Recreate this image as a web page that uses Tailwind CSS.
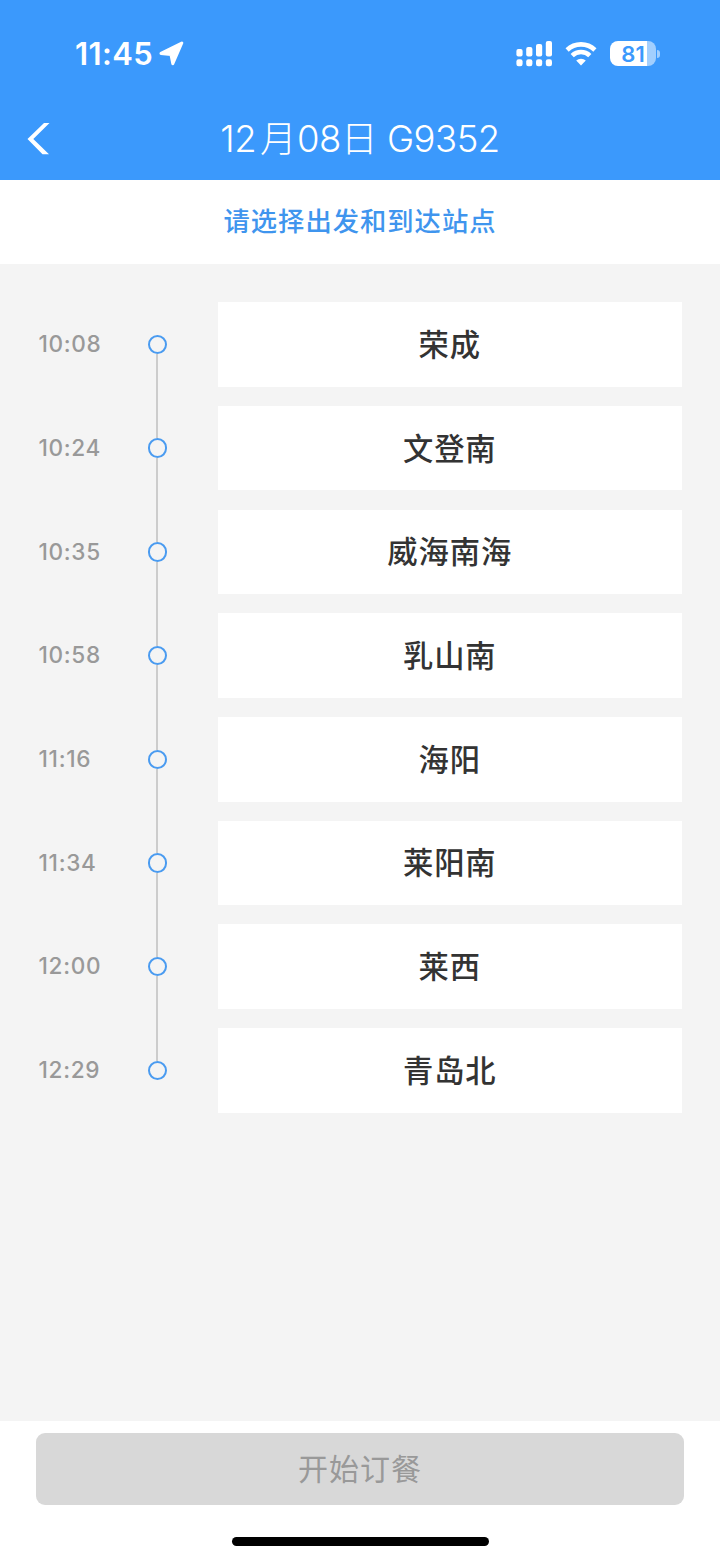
<!DOCTYPE html>
<html lang="zh-CN">
<head>
  <meta charset="UTF-8" />
  <meta name="viewport" content="width=device-width, initial-scale=1.0" />
  <title>选择站点</title>
  <script src="https://cdn.jsdelivr.net/npm/@tailwindcss/browser@4"></script>
</head>
<body class="bg-[#f4f4f4] font-['Inter','Noto_Sans_CJK_SC',sans-serif]">
  <div class="flex flex-col w-[720px] h-[1561px]">

    <!-- Header -->
    <header class="h-[179.5px] bg-[#3b99fc] text-white shrink-0">
      <!-- Status bar -->
      <div class="flex items-center justify-between h-[98px] pt-[9px] pl-[75px] pr-[60px]">
        <div class="flex items-center">
          <span class="w-[84px] text-[31px] leading-none font-semibold tracking-[0.4px] whitespace-nowrap">11:45</span>
          <svg class="w-[25px] h-[25px]" viewBox="0 0 25 25" fill="#fff" stroke="#fff" stroke-width="3" stroke-linejoin="round">
            <path d="M22.8 2L13.8 22.7L12 13.6L2 12.4Z" />
          </svg>
        </div>
        <div class="flex items-center">
          <svg class="w-[36px] h-[26px] mr-[13px]" viewBox="0 0 36 26" fill="#fff">
            <rect x="0.4" y="8" width="6.2" height="7.5" rx="2" />
            <rect x="10.2" y="6" width="6.2" height="9.5" rx="2" />
            <rect x="20" y="3" width="6.2" height="12.5" rx="2" />
            <rect x="29.8" y="0" width="6.2" height="15.5" rx="2" />
            <rect x="0.4" y="18.2" width="6.2" height="7" rx="2.2" />
            <rect x="10.2" y="18.2" width="6.2" height="7" rx="2.2" />
            <rect x="20" y="18.2" width="6.2" height="7" rx="2.2" />
            <rect x="29.8" y="18.2" width="6.2" height="7" rx="2.2" />
          </svg>
          <svg class="w-[32px] h-[24px] mr-[13px]" viewBox="0 0 32 24" fill="none" stroke="#fff" stroke-width="4.6">
            <path d="M2.1 8A20 20 0 0 1 29.9 8" />
            <path d="M7.2 13.6A12.7 12.7 0 0 1 24.8 13.6" />
            <path d="M16 23.6L11.2 18.6A7.2 7.2 0 0 1 20.8 18.6Z" fill="#fff" stroke="none" />
          </svg>
          <div class="flex w-[46px] h-[25px] rounded-[8px] bg-linear-to-r from-white from-81% to-[#a2cffe] to-81% justify-center items-center text-[22px] leading-none font-semibold text-[#3b99fc]">81</div>
          <div class="w-[3px] h-[8px] ml-px rounded-r-full bg-[#a2cffe]"></div>
        </div>
      </div>
      <!-- Title bar -->
      <div class="grid grid-cols-[80px_1fr_80px] items-center h-[81px]">
        <svg class="w-[23px] h-[32px] ml-[27px]" viewBox="0 0 23 32" fill="#fff">
          <path d="M17 0H22.5L6.3 16L22 31.3H15.5L0.5 16Z" />
        </svg>
        <h1 class="pt-px text-center text-[36.5px] leading-none font-light tracking-[-0.5px] whitespace-nowrap">12<span class="ml-[4px] mr-px">月</span>08<span>日</span><span class="ml-[10px]">G9352</span></h1>
      </div>
    </header>

    <div class="h-[84.5px] bg-white shrink-0 flex items-center justify-center text-[26.3px] tracking-[1px] font-medium text-[#3f95ee]">请选择出发和到达站点</div>

    <!-- Stations -->
    <main id="stations" class="grow pt-[38.3px] pl-[38px] pr-[38.5px] flex flex-col gap-[19.2px]"></main>

    <!-- Bottom bar -->
    <footer class="h-[140px] shrink-0 bg-white px-[36px] pt-[12px] flex flex-col items-center">
      <button class="w-full h-[72px] shrink-0 rounded-[9px] bg-[#d8d8d8] text-[#999] text-[30px] tracking-[1px] font-normal">开始订餐</button>
      <div class="w-[257px] h-[9px] mt-[32px] rounded-full bg-black"></div>
    </footer>
  </div>

  <script>
    const stations = [
      { time: "10:08", name: "荣成" },
      { time: "10:24", name: "文登南" },
      { time: "10:35", name: "威海南海" },
      { time: "10:58", name: "乳山南" },
      { time: "11:16", name: "海阳" },
      { time: "11:34", name: "莱阳南" },
      { time: "12:00", name: "莱西" },
      { time: "12:29", name: "青岛北" },
    ];

    document.getElementById("stations").innerHTML = stations.map((s, i) => `
      <div class="flex items-center h-[84.5px] shrink-0">
        <span class="w-[109.5px] pl-[0.6px] text-[22.6px] leading-none tracking-[0.65px] font-medium text-[#999]">${s.time}</span>
        <div class="relative w-[19.5px] h-[19.5px] mr-[51px] rounded-full border-2 border-[#4a9bf0]">
          ${i < stations.length - 1 ? `<div class="absolute left-[6.4px] top-[17.5px] w-[2px] h-[84.2px] bg-[#ccc]"></div>` : ""}
        </div>
        <div class="grow h-full pt-[2px] bg-white flex items-center justify-center text-[30.3px] tracking-[0.9px] font-medium text-[#333]">${s.name}</div>
      </div>
    `).join("");
  </script>
</body>
</html>
